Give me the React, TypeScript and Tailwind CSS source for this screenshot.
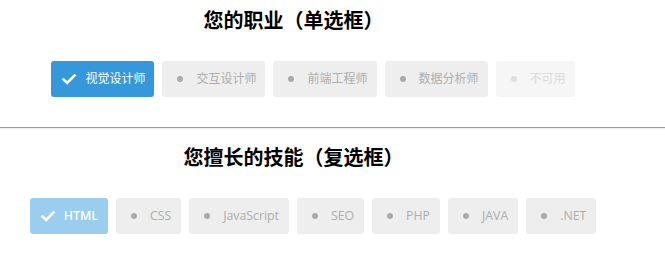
import React from "react";

const Check = () => (
  <svg width="16" height="16" viewBox="0 0 16 16" className="shrink-0">
    <path d="M2.5 8.5 L6.2 12 L13.5 4.5" fill="none" stroke="white" strokeWidth="2.6" strokeLinecap="square" />
  </svg>
);

type Item = { label: string; state: "on" | "off" | "disabled" | "onLight" };

const Btn = ({ label, state, latin }: Item & { latin?: boolean }) => {
  const base = `flex items-center h-[36px] pl-[10px] rounded-[3px] gap-[8px] ${latin ? "text-[12.3px] pr-[10px]" : "text-[12px] pr-[9px]"}`;
  const cls =
    state === "on"
      ? "bg-[#3498db] text-white"
      : state === "onLight"
      ? "bg-[#9acdee] text-white font-semibold"
      : state === "disabled"
      ? "bg-[#f6f6f6] text-[#dadada]"
      : "bg-[#eeeeee] text-[#adadad]";
  return (
    <div className={`${base} ${cls}`}>
      <div className="w-[16px] flex items-center justify-center">
        {state === "on" || state === "onLight" ? (
          <Check />
        ) : (
          <span className={`block w-[6px] h-[6px] rounded-full ${state === "disabled" ? "bg-[#dedede]" : "bg-[#aaaaaa]"}`} />
        )}
      </div>
      <span>{label}</span>
    </div>
  );
};

export default function App() {
  const jobs: Item[] = [
    { label: "视觉设计师", state: "on" },
    { label: "交互设计师", state: "off" },
    { label: "前端工程师", state: "off" },
    { label: "数据分析师", state: "off" },
    { label: "不可用", state: "disabled" },
  ];
  const skills: Item[] = [
    { label: "HTML", state: "onLight" },
    { label: "CSS", state: "off" },
    { label: "JavaScript", state: "off" },
    { label: "SEO", state: "off" },
    { label: "PHP", state: "off" },
    { label: "JAVA", state: "off" },
    { label: ".NET", state: "off" },
  ];
  return (
    <div
      className="w-[665px] h-[264px] bg-white overflow-hidden"
      style={{ fontFamily: '"Open Sans", "Noto Sans CJK SC", sans-serif' }}
    >
      <h2
        className="h-[40px] leading-[40px] text-[20px] font-bold text-black text-center pr-[78px]"
        style={{ fontFamily: '"Noto Sans CJK SC", serif' }}
      >
        您的职业（单选框）
      </h2>
      <div className="mt-[21px] flex justify-center gap-[8px] pr-[39px]">
        {jobs.map((j) => (
          <Btn key={j.label} {...j} />
        ))}
      </div>
      <div className="mt-[30px] border-t border-t-[#9a9a9a] border-b border-b-[#eeeeee]" />
      <h2
        className="mt-[8px] h-[40px] leading-[40px] text-[20px] font-bold text-black text-center pr-[78px]"
        style={{ fontFamily: '"Noto Sans CJK SC", serif' }}
      >
        您擅长的技能（复选框）
      </h2>
      <div className="mt-[21px] flex justify-center gap-[8px] pr-[39px]">
        {skills.map((j) => (
          <Btn key={j.label} latin {...j} />
        ))}
      </div>
    </div>
  );
}
